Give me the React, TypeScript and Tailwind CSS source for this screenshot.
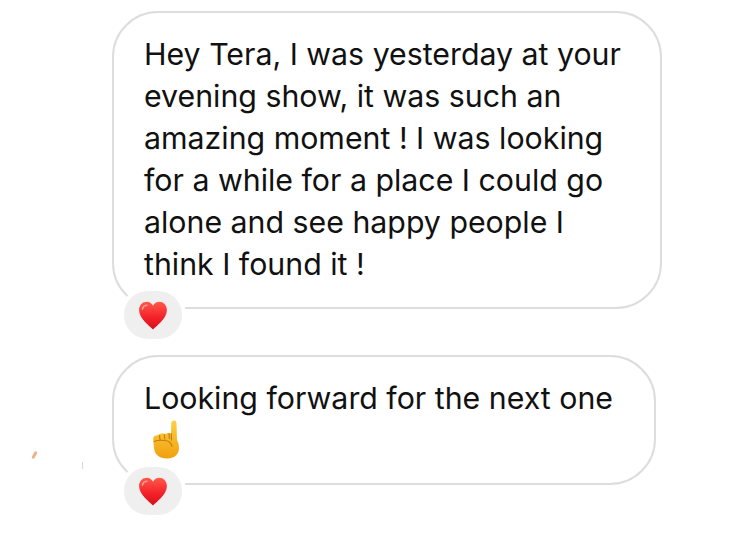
function Heart() {
  return (
    <svg width="30" height="29" viewBox="0 0 30 30">
      <defs>
        <linearGradient id="heart" x1="0" y1="0" x2="0" y2="1">
          <stop offset="0" stopColor="#ff5a4a" />
          <stop offset="0.55" stopColor="#f5222a" />
          <stop offset="1" stopColor="#d3101c" />
        </linearGradient>
      </defs>
      <path
        d="M15 29.500C11.500 26 .6 18.500 .6 9.400C.6 4.300 4.300 .8 8.500 .8C11.300 .8 13.700 2.400 15 5C16.300 2.400 18.700 .8 21.500 .8C25.700 .8 29.400 4.300 29.400 9.400C29.400 18.500 18.500 26 15 29.500Z"
        fill="url(#heart)"
      />
      <path d="M4 8.500C4.500 6 6.500 4.400 8.800 4.400" fill="none" stroke="#ff9c90" strokeWidth="1.500" strokeLinecap="round" />
    </svg>
  );
}

function PointingUp() {
  return (
    <svg width="28" height="40" viewBox="0 0 28 40">
      <defs>
        <linearGradient id="hand" x1="0" y1="0" x2="0" y2="1">
          <stop offset="0" stopColor="#fdd044" />
          <stop offset="1" stopColor="#f0a00e" />
        </linearGradient>
      </defs>
      <path
        d="M22 .5C23.700 .5 24.500 1.800 24.500 3.500L25 20C26.500 23 27 25 27 28C27 34.500 22 38.500 15 38.500C7.500 38.500 2.500 34.500 2 28L1.200 19C1 17 2.500 15.500 4.500 15.500L8 14C9.800 13 11.500 13.200 12.300 14.200L15.500 13C16.500 12.800 18 13 19 13.500L19.300 3.500C19.400 1.800 20.300 .5 22 .5Z"
        fill="url(#hand)"
      />
      <path
        d="M7.500 15.500L8 19.500M12.300 14.500L12.800 19M17 13.500L17.400 18.500M2 21.500C6 20 10 20 13 20.500C17 21 19.500 23 20 26.500M19.300 13.500L19.500 20"
        fill="none"
        stroke="#c07c0c"
        strokeWidth="1.100"
        strokeLinecap="round"
      />
    </svg>
  );
}

function Reaction() {
  return (
    <div className="absolute left-[6px] -bottom-[36px] flex h-[56px] w-[66px] items-center justify-center rounded-full border-4 border-white bg-[#efefef]">
      <Heart />
    </div>
  );
}

export default function App() {
  return (
    <div className="relative flex h-[547px] w-[750px] flex-col items-start gap-[46px] overflow-hidden bg-white pl-[112px] pt-[11px] text-[30.3px] leading-[42px] text-[#111111] [font-family:Inter,'Liberation_Sans',sans-serif]">
      {/* Stray marks left of the second bubble */}
      <span className="absolute left-[33px] top-[451px] h-[8px] w-[3px] rotate-[30deg] rounded-full bg-[#eeb38c]" />
      <span className="absolute left-[82px] top-[462px] h-[7px] w-px bg-[#d8d8d8]" />

      <div className="relative h-[298px] w-[550px] rounded-[46px] border-2 border-[#dddddd] pl-[30px] pt-[20px]">
        <p className="whitespace-nowrap">
          Hey Tera, I was yesterday at your
          <br />
          evening show, it was such an
          <br />
          amazing moment ! I was looking
          <br />
          for a while for a place I could go
          <br />
          alone and see happy people I
          <br />
          think I found it !
        </p>
        <Reaction />
      </div>

      <div className="relative h-[130px] w-[544px] rounded-[46px] border-2 border-[#dddddd] pl-[30px] pt-[20px]">
        <p className="whitespace-nowrap">Looking forward for the next one</p>
        <div className="ml-[8px] mt-[1px] h-[40px]">
          <PointingUp />
        </div>
        <Reaction />
      </div>
    </div>
  );
}
